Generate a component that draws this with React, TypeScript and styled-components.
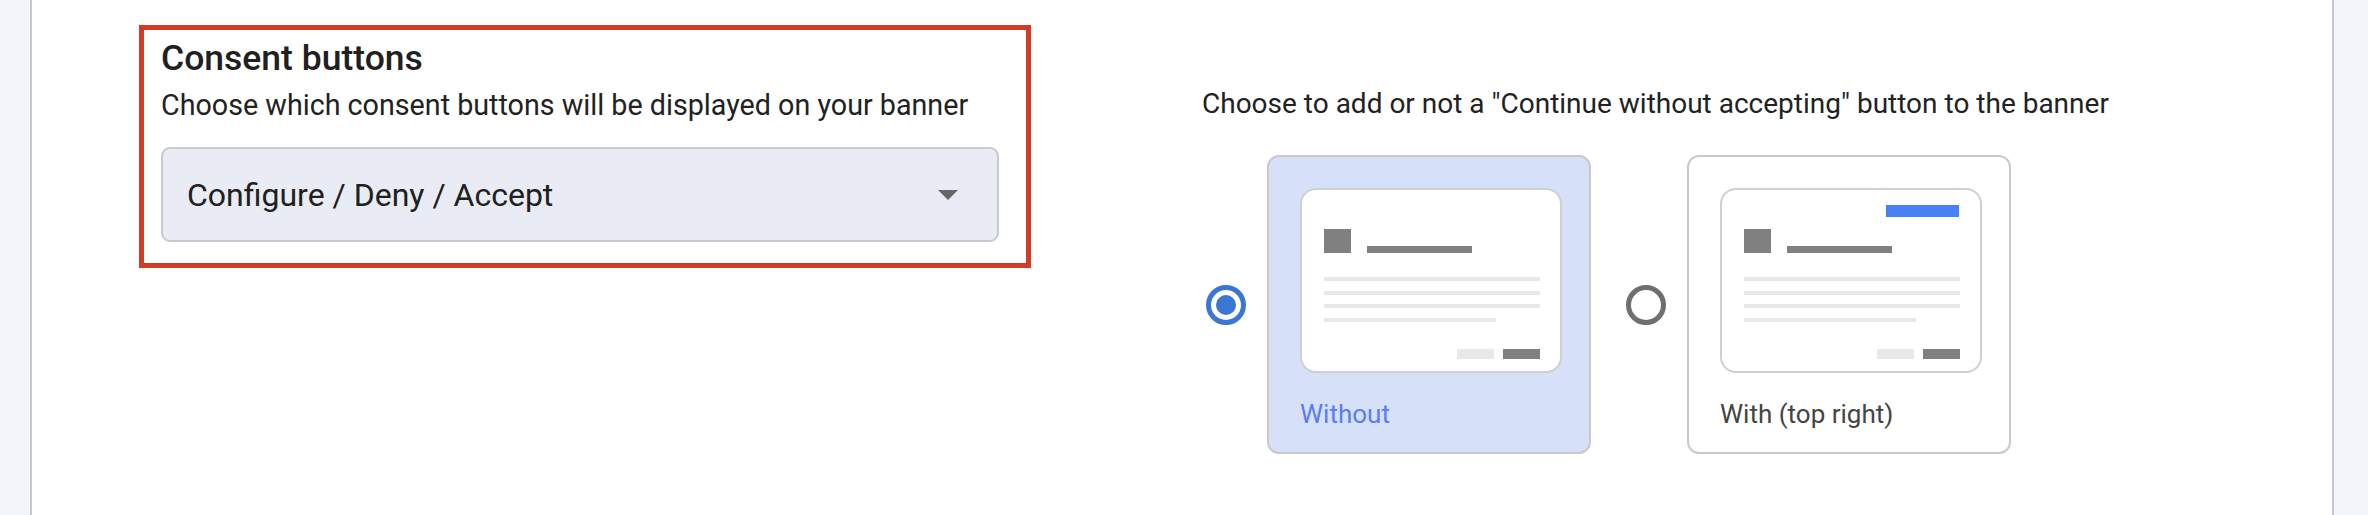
import React from 'react';
import styled, { createGlobalStyle } from 'styled-components';

const GlobalStyle = createGlobalStyle`
  html, body {
    margin: 0;
    padding: 0;
    background: #ffffff;
    font-family: Roboto, 'Liberation Sans', Arial, sans-serif;
    color: #222222;
  }
  * {
    box-sizing: border-box;
  }
`;

const Page = styled.div`
  display: flex;
  min-height: 100vh;
`;

const Gutter = styled.div<{ side: 'left' | 'right' }>`
  flex: 0 0 ${p => (p.side === 'left' ? '32px' : '36px')};
  background: #f3f5fa;
  border-${p => (p.side === 'left' ? 'right' : 'left')}: 2px solid #c3c8d3;
`;

const Main = styled.div`
  flex: 1;
  display: flex;
  align-items: flex-start;
  padding: 25px 0 0 107px;
  background: #ffffff;
`;

const Highlight = styled.section`
  width: 892px;
  border: 5px solid #d13c26;
  padding: 8px 27px 21px 17px;
`;

const Title = styled.h2`
  margin: 0;
  font-size: 35.5px;
  line-height: 40px;
  font-weight: 500;
  color: #202020;
`;

const Hint = styled.p`
  margin: 11px 0 0 0;
  font-size: 28.7px;
  line-height: 32px;
  font-weight: 400;
  color: #222222;
  white-space: nowrap;
`;

const Select = styled.div`
  margin-top: 26px;
  height: 95px;
  display: flex;
  align-items: center;
  justify-content: space-between;
  padding: 0 39px 0 24px;
  background: #e9ecf4;
  border: 2px solid #c5cad5;
  border-radius: 9px;
`;

const SelectValue = styled.span`
  font-size: 32px;
  line-height: 38px;
  color: #202020;
`;

const Caret = styled.span`
  width: 0;
  height: 0;
  border-left: 10px solid transparent;
  border-right: 10px solid transparent;
  border-top: 10px solid #666666;
`;

const RightColumn = styled.div`
  margin-left: 171px;
  padding-top: 63px;
`;

const Question = styled.p`
  margin: 0;
  font-size: 28px;
  line-height: 32px;
  color: #222222;
  white-space: nowrap;
`;

const Options = styled.div`
  display: flex;
  gap: 35px;
  margin-top: 35px;
  padding-left: 4px;
`;

const Option = styled.label`
  display: flex;
  align-items: center;
  gap: 21px;
  cursor: pointer;
`;

const Radio = styled.span<{ checked: boolean }>`
  width: 40px;
  height: 40px;
  border-radius: 50%;
  border: 5px solid ${p => (p.checked ? '#3a77d2' : '#6f6f6f')};
  display: flex;
  align-items: center;
  justify-content: center;
  &::after {
    content: '';
    width: 20px;
    height: 20px;
    border-radius: 50%;
    background: ${p => (p.checked ? '#3a77d2' : 'transparent')};
  }
`;

const Card = styled.div<{ selected: boolean }>`
  width: 324px;
  height: 299px;
  padding: 31px 31px 0 31px;
  border: 2px solid #c9c9c9;
  border-radius: 12px;
  background: ${p => (p.selected ? '#d6e0f9' : '#ffffff')};
`;

const Mockup = styled.div`
  width: 262px;
  height: 185px;
  background: #ffffff;
  border: 2px solid #cfcfcf;
  border-radius: 16px;
  padding: 0 20px 0 22px;
  display: flex;
  flex-direction: column;
`;

const TopSlot = styled.div`
  height: 39px;
  padding-top: 15px;
  display: flex;
  justify-content: flex-end;
  margin-right: 1px;
`;

const Badge = styled.span`
  width: 73px;
  height: 12px;
  background: #4a80f5;
`;

const HeaderRow = styled.div`
  display: flex;
  align-items: flex-end;
  gap: 16px;
`;

const Block = styled.span<{ w: number; h: number; tone: 'dark' | 'light' }>`
  display: block;
  width: ${p => p.w}px;
  height: ${p => p.h}px;
  background: ${p => (p.tone === 'dark' ? '#808080' : '#e8e8e8')};
`;

const Lines = styled.div`
  display: flex;
  flex-direction: column;
  gap: 9.5px;
  margin-top: 24px;
`;

const Buttons = styled.div`
  display: flex;
  justify-content: flex-end;
  gap: 9px;
  margin-top: 27px;
`;

const CardLabel = styled.div<{ selected: boolean }>`
  margin-top: 26px;
  font-size: 26px;
  line-height: 30px;
  color: ${p => (p.selected ? '#5a7ef0' : '#444444')};
`;

type Choice = {
  id: string;
  label: string;
  badge: boolean;
};

const choices: Choice[] = [
  { id: 'without', label: 'Without', badge: false },
  { id: 'top-right', label: 'With (top right)', badge: true },
];

function BannerPreview({ badge }: { badge: boolean }) {
  return (
    <Mockup>
      <TopSlot>{badge && <Badge />}</TopSlot>
      <HeaderRow>
        <Block w={27} h={24} tone='dark' />
        <Block w={105} h={7} tone='dark' />
      </HeaderRow>
      <Lines>
        <Block w={216} h={4} tone='light' />
        <Block w={216} h={4} tone='light' />
        <Block w={216} h={4} tone='light' />
        <Block w={172} h={4} tone='light' />
      </Lines>
      <Buttons>
        <Block w={37} h={10} tone='light' />
        <Block w={37} h={10} tone='dark' />
      </Buttons>
    </Mockup>
  );
}

export default function App() {
  const selected = 'without';
  return (
    <>
      <GlobalStyle />
      <Page>
        <Gutter side='left' />
        <Main>
          <Highlight>
            <Title>Consent buttons</Title>
            <Hint>Choose which consent buttons will be displayed on your banner</Hint>
            <Select>
              <SelectValue>Configure / Deny / Accept</SelectValue>
              <Caret />
            </Select>
          </Highlight>
          <RightColumn>
            <Question>Choose to add or not a "Continue without accepting" button to the banner</Question>
            <Options>
              {choices.map(c => (
                <Option key={c.id}>
                  <Radio checked={c.id === selected} />
                  <Card selected={c.id === selected}>
                    <BannerPreview badge={c.badge} />
                    <CardLabel selected={c.id === selected}>{c.label}</CardLabel>
                  </Card>
                </Option>
              ))}
            </Options>
          </RightColumn>
        </Main>
        <Gutter side='right' />
      </Page>
    </>
  );
}
